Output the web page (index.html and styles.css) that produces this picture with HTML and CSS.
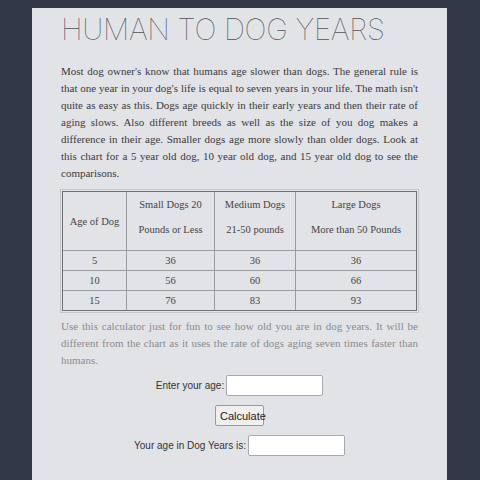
FILE: index.html
```html
<!DOCTYPE html>
<html>
<head>
<meta charset="utf-8">
<link rel="stylesheet" href="styles.css">
</head>
<body>
<div class="card">
  <h1 class="title">HUMAN TO DOG YEARS</h1>
  <p class="intro">
    <span class="ln">Most dog owner's know that humans age slower than dogs. The general rule is</span>
    <span class="ln">that one year in your dog's life is equal to seven years in your life. The math isn't</span>
    <span class="ln">quite as easy as this. Dogs age quickly in their early years and then their rate of</span>
    <span class="ln">aging slows. Also different breeds as well as the size of you dog makes a</span>
    <span class="ln">difference in their age. Smaller dogs age more slowly than older dogs. Look at</span>
    <span class="ln">this chart for a 5 year old dog, 10 year old dog, and 15 year old dog to see the</span>
    <span class="ln last">comparisons.</span>
  </p>
  <table class="chart">
    <tr class="head">
      <td class="c1">Age of Dog</td>
      <td class="c2"><span class="hl">Small Dogs 20</span><span class="hl">Pounds or Less</span></td>
      <td class="c3"><span class="hl">Medium Dogs</span><span class="hl">21-50 pounds</span></td>
      <td class="c4"><span class="hl">Large Dogs</span><span class="hl">More than 50 Pounds</span></td>
    </tr>
    <tr><td>5</td><td>36</td><td>36</td><td>36</td></tr>
    <tr><td>10</td><td>56</td><td>60</td><td>66</td></tr>
    <tr><td>15</td><td>76</td><td>83</td><td>93</td></tr>
  </table>
  <p class="note">
    <span class="ln">Use this calculator just for fun to see how old you are in dog years. It will be</span>
    <span class="ln">different from the chart as it uses the rate of dogs aging seven times faster than</span>
    <span class="ln last">humans.</span>
  </p>
  <div class="calc">
    <div class="row"><label for="age">Enter your age:</label><input id="age" class="field" type="text"></div>
    <div class="row"><button class="btn">Calculate</button></div>
    <div class="row"><label for="dog">Your age in Dog Years is:</label><input id="dog" class="field" type="text"></div>
  </div>
</div>
</body>
</html>
```
FILE: styles.css
```css
html, body {
  margin: 0;
  padding: 0;
  background: #323848;
  height: 480px;
  overflow: hidden;
}
.card {
  width: 357px;
  margin: 8px auto 0;
  padding: 4px 29px 20px 29px;
  background: #e2e3e7;
  height: 470px;
  position: relative;
  left: -0.5px;
}
.title {
  margin: 0;
  font-family: Inter, "Liberation Sans", sans-serif;
  font-weight: 100;
  font-size: 29.3px;
  line-height: 36px;
  color: #505156;
  letter-spacing: -0.3px;
}
.intro, .note {
  font-family: "Liberation Serif", serif;
  font-size: 11px;
  line-height: 17px;
  word-spacing: -0.4px;
  margin: 15px 0 0;
  color: #3a3a3c;
}
.ln {
  display: block;
  white-space: nowrap;
  text-align: justify;
  text-align-last: justify;
}
.ln.last { text-align-last: left; }
.note {
  color: #8a8b8e;
  margin-top: 7px;
}
.chart {
  margin-top: 9px;
  width: 355px;
  border-collapse: separate;
  border-spacing: 0;
  border: 1px solid #6f7074;
  outline: 1px solid #c4c5c9;
  outline-offset: 1px;
  font-family: "Liberation Serif", serif;
  font-size: 10.5px;
  color: #444;
  margin-left: 1px;
}
.chart td {
  border-left: 1px solid #9a9b9f;
  border-top: 1px solid #9a9b9f;
  text-align: center;
  height: 19px;
  padding: 0;
}
.chart tr td:first-child { border-left: none; }
.chart tr:first-child td { border-top: none; }
.head td { height: 50px; padding-bottom: 8px; }
.head td.c1 { padding-bottom: 0; height: 58px; }
.hl { display: block; line-height: 25px; }
.c1 { width: 63px; }
.c2 { width: 87px; }
.c3 { width: 80px; }
.calc {
  font-family: "Liberation Sans", Arial, sans-serif;
  font-size: 10px;
  color: #333;
  margin-top: 6px;
}
.row {
  display: flex;
  justify-content: center;
  align-items: center;
  gap: 2px;
  margin-bottom: 9px;
}
.field {
  box-sizing: border-box;
  width: 97px;
  height: 21px;
  border: 1px solid #a8a9ad;
  border-radius: 2px;
  background: #fff;
  padding: 1px;
}
.btn {
  box-sizing: border-box;
  font-family: "Liberation Sans", Arial, sans-serif;
  font-size: 11px;
  color: #222;
  background: #efeff0;
  border: 1px solid #9a9a9a;
  border-radius: 2px;
  padding: 0 4px;
  width: 49px;
  height: 21px;
}
```
